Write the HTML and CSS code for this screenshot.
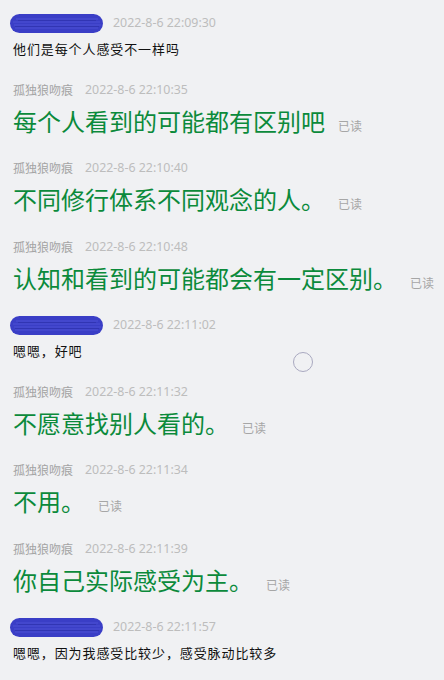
FILE: index.html
```html
<!DOCTYPE html>
<html lang="zh-CN">
<head>
<meta charset="utf-8">
<title>聊天记录</title>
<link rel="stylesheet" href="styles.css">
</head>
<body>
<div class="chat">
  <div class="msg other">
    <div class="meta"><span class="redact"><svg width="93" height="19" viewBox="0 0 93 19"><rect x="0" y="0" width="93" height="19" rx="9.5" fill="#3a3ec6"/><path d="M6 5 H88 M3 8 H90 M4 11 H91 M5 14 H88" stroke="#5559dc" stroke-width="1" opacity="0.7"/><path d="M8 6.5 H86 M5 12.5 H89" stroke="#2c30a8" stroke-width="1" opacity="0.6"/></svg></span><span class="time">2022-8-6 22:09:30</span></div>
    <div class="text">他们是每个人感受不一样吗</div>
  </div>
  <div class="msg self">
    <div class="meta"><span class="name">孤独狼吻痕</span><span class="time">2022-8-6 22:10:35</span></div>
    <div class="line"><span class="big">每个人看到的可能都有区别吧</span><span class="read">已读</span></div>
  </div>
  <div class="msg self">
    <div class="meta"><span class="name">孤独狼吻痕</span><span class="time">2022-8-6 22:10:40</span></div>
    <div class="line"><span class="big">不同修行体系不同观念的人。</span><span class="read">已读</span></div>
  </div>
  <div class="msg self">
    <div class="meta"><span class="name">孤独狼吻痕</span><span class="time">2022-8-6 22:10:48</span></div>
    <div class="line"><span class="big">认知和看到的可能都会有一定区别。</span><span class="read">已读</span></div>
  </div>
  <div class="msg other">
    <div class="meta"><span class="redact"><svg width="93" height="19" viewBox="0 0 93 19"><rect x="0" y="0" width="93" height="19" rx="9.5" fill="#3a3ec6"/><path d="M6 5 H88 M3 8 H90 M4 11 H91 M5 14 H88" stroke="#5559dc" stroke-width="1" opacity="0.7"/><path d="M8 6.5 H86 M5 12.5 H89" stroke="#2c30a8" stroke-width="1" opacity="0.6"/></svg></span><span class="time">2022-8-6 22:11:02</span></div>
    <div class="text">嗯嗯，好吧</div>
  </div>
  <div class="msg self">
    <div class="meta"><span class="name">孤独狼吻痕</span><span class="time">2022-8-6 22:11:32</span></div>
    <div class="line"><span class="big">不愿意找别人看的。</span><span class="read">已读</span></div>
  </div>
  <div class="msg self">
    <div class="meta"><span class="name">孤独狼吻痕</span><span class="time">2022-8-6 22:11:34</span></div>
    <div class="line"><span class="big">不用。</span><span class="read">已读</span></div>
  </div>
  <div class="msg self">
    <div class="meta"><span class="name">孤独狼吻痕</span><span class="time">2022-8-6 22:11:39</span></div>
    <div class="line"><span class="big">你自己实际感受为主。</span><span class="read">已读</span></div>
  </div>
  <div class="msg other">
    <div class="meta"><span class="redact"><svg width="93" height="19" viewBox="0 0 93 19"><rect x="0" y="0" width="93" height="19" rx="9.5" fill="#3a3ec6"/><path d="M6 5 H88 M3 8 H90 M4 11 H91 M5 14 H88" stroke="#5559dc" stroke-width="1" opacity="0.7"/><path d="M8 6.5 H86 M5 12.5 H89" stroke="#2c30a8" stroke-width="1" opacity="0.6"/></svg></span><span class="time">2022-8-6 22:11:57</span></div>
    <div class="text">嗯嗯，因为我感受比较少，感受脉动比较多</div>
  </div>
  <div class="cursor"></div>
</div>
</body>
</html>
```

FILE: styles.css
```css
html, body {
  margin: 0;
  padding: 0;
}
body {
  background: #f0f1f3;
  font-family: "Noto Sans CJK SC", "Noto Sans", sans-serif;
  width: 444px;
  height: 680px;
  overflow: hidden;
}
.chat {
  position: relative;
  display: flex;
  flex-direction: column;
  padding: 13px 0 0 13px;
}
.meta {
  display: flex;
  align-items: center;
  height: 20px;
  gap: 12px;
}
.other .meta {
  margin-left: -3px;
  gap: 10px;
}
.redact {
  display: flex;
  width: 93px;
  height: 19px;
}
.name {
  font-size: 12px;
  color: #a4a4a4;
  line-height: 20px;
}
.time {
  font-family: "Noto Sans", "Open Sans", sans-serif;
  font-size: 12.4px;
  color: #bdbdbd;
  line-height: 20px;
}
.msg.other {
  padding-bottom: 20.5px;
}
.msg.self {
  padding-bottom: 21.5px;
}
.text {
  margin-top: 6px;
  font-size: 13px;
  letter-spacing: 0.9px;
  line-height: 20px;
  color: #111111;
}
.line {
  margin-top: 5px;
  display: flex;
  align-items: baseline;
  gap: 13px;
  height: 32px;
}
.big {
  font-size: 24px;
  line-height: 32px;
  color: #0b8a3b;
}
.read {
  font-size: 12px;
  color: #a6a6a6;
}
.cursor {
  position: absolute;
  left: 293px;
  top: 352px;
  width: 18px;
  height: 18px;
  border: 1px solid #a9a9c0;
  border-radius: 50%;
}
```
